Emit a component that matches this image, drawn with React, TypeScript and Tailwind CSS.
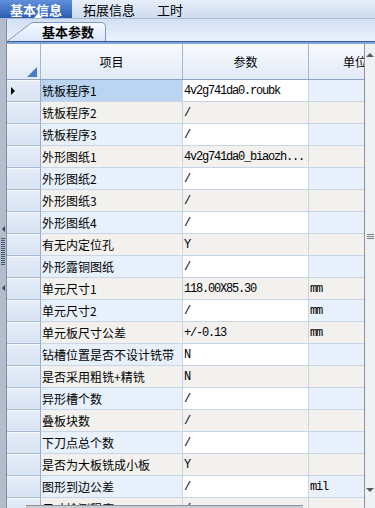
import React from "react";

const rows: [string, string, string][] = [
  ["铣板程序1", "4v2g741da0.roubk", ""],
  ["铣板程序2", "/", ""],
  ["铣板程序3", "/", ""],
  ["外形图纸1", "4v2g741da0_biaozh...", ""],
  ["外形图纸2", "/", ""],
  ["外形图纸3", "/", ""],
  ["外形图纸4", "/", ""],
  ["有无内定位孔", "Y", ""],
  ["外形露铜图纸", "/", ""],
  ["单元尺寸1", "118.00X85.30", "mm"],
  ["单元尺寸2", "/", "mm"],
  ["单元板尺寸公差", "+/-0.13", "mm"],
  ["钻槽位置是否不设计铣带", "N", ""],
  ["是否采用粗铣+精铣", "N", ""],
  ["异形槽个数", "/", ""],
  ["叠板块数", "/", ""],
  ["下刀点总个数", "/", ""],
  ["是否为大板铣成小板", "Y", ""],
  ["图形到边公差", "/", "mil"],
  ["尺寸检测程序", "/", ""],
];

const mono = "font-['Liberation_Mono','Noto_Sans_CJK_SC',monospace] text-[12px] tracking-[-1.2px]";

export default function App() {
  return (
    <div className="relative w-[375px] h-[508px] overflow-hidden bg-[#eef2f8] font-['Noto_Sans_CJK_SC',sans-serif] text-black">
      {/* top tabs */}
      <div className="flex h-[19px] items-stretch bg-gradient-to-b from-[#e7eef9] to-[#cddbef] border-b border-[#a9bcd8]">
        <div className="relative w-[72px] flex items-center justify-center bg-gradient-to-b from-[#5f90dc] to-[#2b5db4] text-white font-bold text-[13px] leading-none">
          基本信息
          <span className="absolute bottom-0 left-[34px] w-0 h-0 border-l-[4px] border-r-[4px] border-b-[5px] border-l-transparent border-r-transparent border-b-white" />
        </div>
        <div className="ml-[11px] flex items-center text-[13px] leading-none">拓展信息</div>
        <div className="ml-[22px] flex items-center text-[13px] leading-none">工时</div>
      </div>

      <div className="flex h-[489px]">
        {/* left splitter */}
        <div className="w-[7px] shrink-0 bg-[#b3bccb] border-r border-[#7f8ca2] flex flex-col items-center">
          <div className="mt-[207px] w-0 h-0 border-t-[3px] border-b-[3px] border-t-transparent border-b-transparent border-r-[3px] border-r-[#34425a]" />
          <div className="mt-[6px] flex flex-col gap-[1px]">
            {Array.from({ length: 14 }).map((_, i) => (
              <div key={i} className="w-[4px] h-[1px] bg-[#4a5872]" />
            ))}
          </div>
          <div className="mt-[20px] w-0 h-0 border-t-[3px] border-b-[3px] border-t-transparent border-b-transparent border-r-[3px] border-r-[#34425a]" />
        </div>

        <div className="flex-1 min-w-0 flex flex-col">
          {/* sub tab row */}
          <div className="h-[22px] shrink-0 bg-gradient-to-b from-[#d2dff3] to-[#eaf1fc] flex items-end">
            <div className="relative w-[99px] h-[19px] flex items-center pl-[35px]">
              <svg className="absolute inset-0" width="99" height="19" viewBox="0 0 99 19">
                <defs>
                  <linearGradient id="stg" x1="0" y1="0" x2="0" y2="1">
                    <stop offset="0" stopColor="#f7faff" />
                    <stop offset="1" stopColor="#d9e6f8" />
                  </linearGradient>
                </defs>
                <path d="M0.5 19 L23.5 1.5 Q25 0.5 27 0.5 L94.5 0.5 Q98.5 0.5 98.5 4.5 L98.5 19 Z" fill="url(#stg)" />
                <path d="M0.5 19 L23.5 1.5 Q25 0.5 27 0.5 L94.5 0.5 Q98.5 0.5 98.5 4.5 L98.5 19" fill="none" stroke="#7d98c0" strokeWidth="1" />
              </svg>
              <span className="relative font-bold text-[13px] leading-none">基本参数</span>
            </div>
          </div>
          {/* blue bar */}
          <div className="h-[1px] shrink-0 bg-[#34599c]" />
          <div className="h-[2px] shrink-0 bg-[#82a5da]" />

          {/* grid */}
          <div className="flex-1 min-h-0 flex">
            <div className="flex-1 min-w-0 overflow-hidden flex flex-col bg-white">
              {/* header */}
              <div className="flex h-[36px] shrink-0 border-b border-[#8fa4c4] bg-gradient-to-b from-[#f8fafd] to-[#e2eaf6] text-[12px]">
                <div className="relative w-[34px] shrink-0 border-r border-[#a5b7d0]">
                  <svg className="absolute right-[3px] bottom-[2px]" width="10" height="10" viewBox="0 0 10 10">
                    <path d="M10 0 L10 10 L0 10 Z" fill="#4a7cc8" />
                  </svg>
                </div>
                <div className="w-[142px] shrink-0 border-r border-[#a5b7d0] flex items-center justify-center">项目</div>
                <div className="w-[126px] shrink-0 border-r border-[#a5b7d0] flex items-center justify-center">参数</div>
                <div className="w-[92px] shrink-0 flex items-center pl-[34px]">单位</div>
              </div>
              {rows.map(([label, val, unit], i) => {
                const odd = i % 2 === 0;
                const sel = i === 0;
                const side = odd ? "bg-[#e8f0fb]" : "bg-[#f2f1ee]";
                const mid = odd ? "bg-white" : "bg-[#f2f1ee]";
                return (
                  <div key={i} className="flex h-[22px] shrink-0">
                    <div className="w-[34px] shrink-0 border-r border-b border-r-[#9aaecb] border-b-[#a9b9d0] bg-gradient-to-b from-[#e6edf8] to-[#d7e2f2] shadow-[inset_0_1px_0_#f6f9fd] flex items-center pl-[4px]">
                      {sel && (
                        <div className="w-0 h-0 border-t-[4px] border-b-[4px] border-t-transparent border-b-transparent border-l-[4px] border-l-black" />
                      )}
                    </div>
                    <div className={`w-[142px] shrink-0 border-r border-b border-[#c8d5e8] flex items-center pl-[1px] text-[12px] leading-none whitespace-nowrap overflow-hidden ${sel ? "bg-[#bad4f1]" : side}`}>
                      {label}
                    </div>
                    <div className={`w-[126px] shrink-0 border-r border-b border-[#c8d5e8] flex items-center pl-[1px] whitespace-nowrap overflow-hidden ${mid} ${mono}`}>
                      {val}
                    </div>
                    <div className={`w-[92px] shrink-0 border-b border-[#c8d5e8] flex items-center pl-[1px] whitespace-nowrap ${side} ${mono}`}>
                      {unit}
                    </div>
                  </div>
                );
              })}
            </div>
            {/* vertical scrollbar */}
            <div className="w-[11px] shrink-0 bg-[#eef0f3] border-l border-[#8d939b] flex flex-col items-center">
              <div className="mt-[9px] w-0 h-0 border-l-[4px] border-r-[4px] border-b-[4px] border-l-transparent border-r-transparent border-b-[#555b63]" />
              <div className="mt-[177px] flex flex-col gap-[1px]">
                <div className="w-[7px] h-[1px] bg-[#7c828a]" />
                <div className="w-[7px] h-[1px] bg-[#7c828a]" />
                <div className="w-[7px] h-[1px] bg-[#7c828a]" />
              </div>
              <div className="mt-[249px] w-0 h-0 border-l-[4px] border-r-[4px] border-t-[4px] border-l-transparent border-r-transparent border-t-[#555b63]" />
            </div>
          </div>
        </div>
      </div>

      {/* horizontal scrollbar thumb edge */}
      <div className="absolute bottom-0 left-[26px] w-[277px] h-[3px] bg-[#c9cdd3] border-t border-[#8e949c]" />
    </div>
  );
}
